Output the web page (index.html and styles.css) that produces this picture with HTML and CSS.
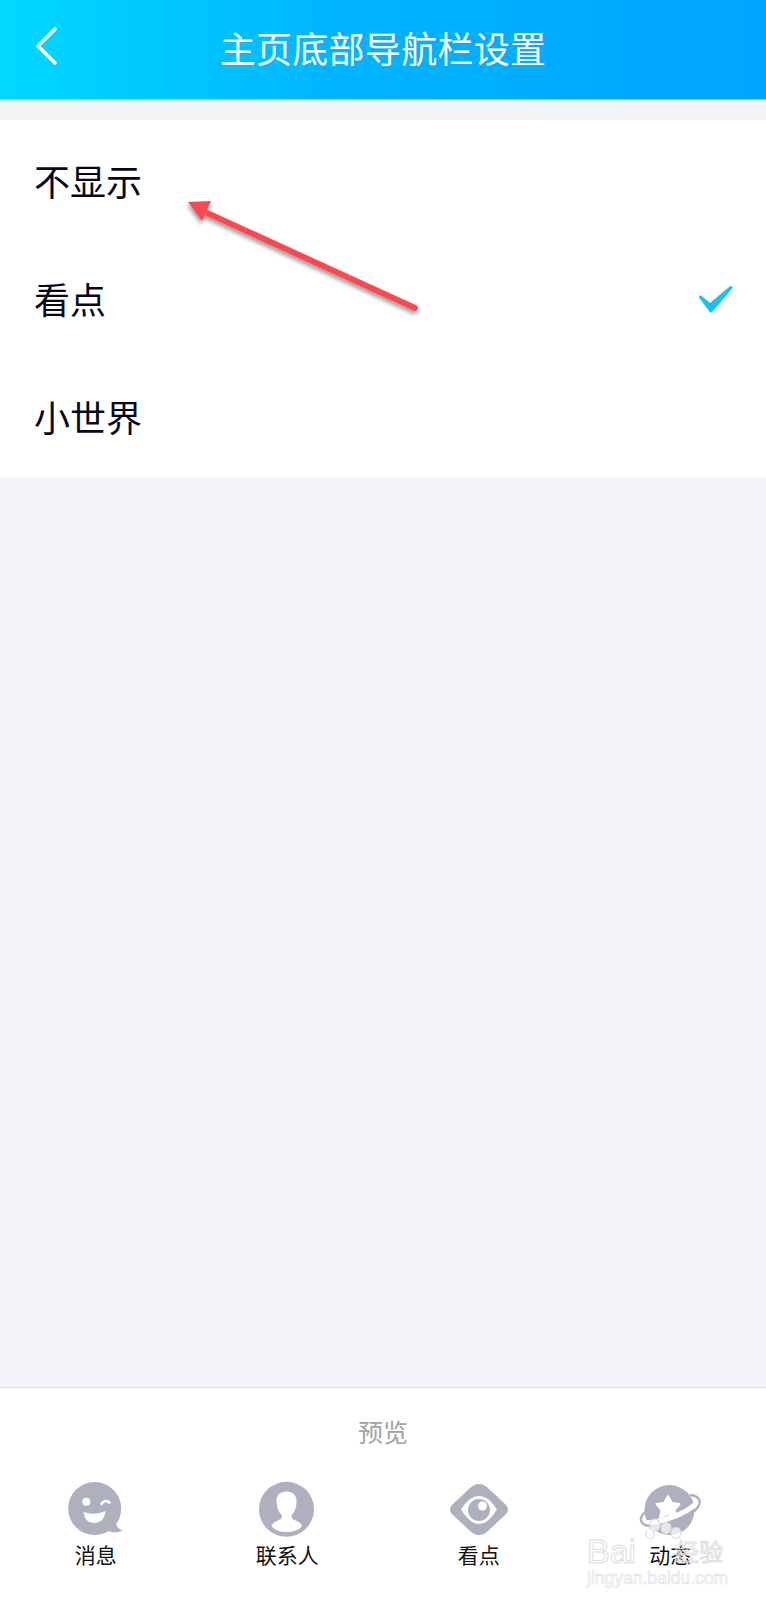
FILE: index.html
```html
<!DOCTYPE html>
<html lang="zh-CN">
<head>
    <meta charset="UTF-8">
    <meta name="viewport" content="width=device-width, initial-scale=1.0">
    <title>主页底部导航栏设置</title>
    <link rel="stylesheet" href="styles.css">
</head>
<body>
    <div class="page">
        <header class="header">
            <svg class="back" width="24" height="40" viewBox="0 0 24 40">
                <path d="M20 3 L3 20 L20 37" fill="none" stroke="#fff" stroke-width="3.6" stroke-linecap="round" stroke-linejoin="round"/>
            </svg>
            <h1>主页底部导航栏设置</h1>
        </header>

        <main class="content">
            <ul class="options">
                <li>不显示</li>
                <li>看点
                    <svg class="check" width="36" height="28" viewBox="0 0 36 28">
                        <path d="M2.5 12 L12 20 L33 2.5 L13 26 Z" fill="#12c4f4" stroke="#12c4f4" stroke-width="3" stroke-linejoin="round"/>
                    </svg>
                </li>
                <li>小世界</li>
            </ul>
        </main>

        <footer class="preview">
            <div class="preview-title">预览</div>
            <nav class="tabs">
                <div class="tab">
                    <svg width="60" height="60" viewBox="0 0 60 60">
                        <path d="M40 50 C46 53 52 53 57 50.5 C52 49 50 46 50 42 Z" fill="#aeb0be"/>
                        <circle cx="28.7" cy="28.5" r="26.5" fill="#aeb0be"/>
                        <circle cx="20.3" cy="21.7" r="4" fill="#fff"/>
                        <path d="M35.5 24 C37.5 20.5 41 20 43.5 22.5" fill="none" stroke="#fff" stroke-width="2.6" stroke-linecap="round"/>
                        <path d="M17.6 32 Q28 36 39.5 31 Q38 43 28 43 Q18.5 43 17.6 32Z" fill="#fff"/>
                    </svg>
                    <span>消息</span>
                </div>
                <div class="tab">
                    <svg width="60" height="60" viewBox="0 0 60 60">
                        <circle cx="29.5" cy="29.3" r="27.5" fill="#aeb0be"/>
                        <path d="M29.5 11.5 C36 11.5 40 15.5 39.5 22 C39.5 27 38 32 34.5 35.5 L35 38.5 C39 41 44 42 45 46 C42 50 36 52 29.5 52 C23 52 17.5 50 14.5 46 C15.5 42 20.5 41 24.5 38.5 L25 35.5 C21.5 32 20 28 20 24 L19.5 22 C19 15.5 23 11.5 29.5 11.5Z" fill="#fff"/>
                    </svg>
                    <span>联系人</span>
                </div>
                <div class="tab">
                    <svg width="60" height="60" viewBox="0 0 60 60">
                        <path d="M30 4 C34 4 37 6 40 9 L56 24 C60 27.5 60 31.5 56 35 L40 50 C37 53 34 55 30 55 C26 55 23 53 20 50 L4 35 C0 31.5 0 27.5 4 24 L20 9 C23 6 26 4 30 4Z" fill="#aeb0be"/>
                        <path d="M12 29.5 C18 20 24 16 30 16 C36 16 42 20 48 29.5 C42 39 36 44 30 44 C24 44 18 39 12 29.5Z" fill="#fff"/>
                        <circle cx="30" cy="30" r="11" fill="#aeb0be"/>
                        <circle cx="33.5" cy="26" r="4.5" fill="#fff"/>
                    </svg>
                    <span>看点</span>
                </div>
                <div class="tab">
                    <svg width="60" height="60" viewBox="0 0 60 60">
                        <circle cx="29.5" cy="30" r="25" fill="#aeb0be"/>
                        <path d="M28 16 L32 23 L39.5 24 L34.5 30 L36 37.5 L28 34 L20 37.5 L21.5 30 L16.5 24 L24 23 Z" fill="#fff" stroke="#fff" stroke-width="2" stroke-linejoin="round"/>
                        <path d="M6 43 C24 42 44 34 56 24" fill="none" stroke="#fff" stroke-width="5"/>
                        <path d="M51 15 C58 16 61 20 59 25 C56 33 36 44 16 46 C6 47 0 44 1 38 C1.5 36 3 34 5 32" fill="none" stroke="#aeb0be" stroke-width="2.4" stroke-linecap="round"/>
                    </svg>
                    <span>动态</span>
                </div>
            </nav>
        </footer>

        <!-- red arrow drawn on top of the screenshot -->
        <svg class="arrow" width="766" height="340" viewBox="0 0 766 340">
            <defs>
                <filter id="arrow-shadow" x="-10%" y="-20%" width="120%" height="140%">
                    <feDropShadow dx="-1" dy="3" stdDeviation="2" flood-color="#000" flood-opacity="0.4"/>
                </filter>
            </defs>
            <g filter="url(#arrow-shadow)">
                <path d="M205 212 L415 308" fill="none" stroke="#fb4a4f" stroke-width="6" stroke-linecap="round"/>
                <path d="M188 202 L211 201 L202 221 Z" fill="#fb4a4f"/>
            </g>
        </svg>

        <!-- site watermark -->
        <div class="watermark">
            <svg class="paw" width="40" height="30" viewBox="0 0 40 30">
                <g fill="#fff" fill-opacity="0.7" stroke="#dcdde3" stroke-width="1.2">
                    <ellipse cx="10" cy="7" rx="5" ry="6"/>
                    <ellipse cx="21" cy="10" rx="5" ry="5.5"/>
                    <ellipse cx="31" cy="15" rx="5" ry="5.5"/>
                    <ellipse cx="5" cy="16" rx="4" ry="5"/>
                </g>
            </svg>
            <div class="wm-brand"><span>Bai</span><span class="wm-cn">经验</span></div>
            <div class="wm-url">jingyan.baidu.com</div>
        </div>
    </div>
</body>
</html>
```

FILE: styles.css
```css
* {
    box-sizing: border-box;
}

body {
    margin: 0;
    font-family: "Noto Sans CJK SC", "Noto Sans", sans-serif;
    background-color: #f4f5f9;
}

.page {
    position: relative;
    display: flex;
    flex-direction: column;
    min-height: 1600px;
    overflow: hidden;
}

.header {
    position: relative;
    display: flex;
    justify-content: center;
    align-items: center;
    height: 100px;
    background: linear-gradient(90deg, #00d9ff 0%, #00b4ff 45%, #00a5ff 100%);
    border-bottom: 1px solid #6fdcff;
}

.header h1 {
    margin: 0 0 6px;
    font-size: 36px;
    font-weight: 400;
    letter-spacing: 0.3px;
    color: #fff;
}

.back {
    position: absolute;
    left: 35px;
    top: 26px;
}

.content {
    flex: 1;
    padding-top: 20px;
}

.options {
    list-style: none;
    margin: 0;
    padding: 1px 0 2px;
    background-color: #fff;
}

.options li {
    display: flex;
    justify-content: space-between;
    align-items: center;
    height: 118px;
    padding: 0 32px 0 34px;
    font-size: 36px;
    color: #05081c;
}

.check {
    margin-top: 2px;
}

.preview {
    height: 213px;
    background-color: #fff;
    border-top: 1px solid #dfe0e4;
}

.preview-title {
    padding-top: 23px;
    font-size: 25px;
    line-height: 40px;
    text-align: center;
    color: #a2a2a6;
}

.tabs {
    display: grid;
    grid-template-columns: repeat(4, 1fr);
    margin-top: 29px;
}

.tab {
    display: flex;
    flex-direction: column;
    align-items: center;
}

.tab svg {
    overflow: visible;
}

.tab span {
    margin-top: -1px;
    font-size: 21px;
    line-height: 30px;
    color: #111;
}

.arrow {
    position: absolute;
    left: 0;
    top: 0;
}

.watermark {
    position: absolute;
    left: 587px;
    top: 1516px;
    width: 136px;
    font-family: "Liberation Sans", sans-serif;
    color: transparent;
    -webkit-text-stroke: 1px #dcdde3;
}

.paw {
    position: absolute;
    left: 58px;
    top: 2px;
}

.wm-brand {
    display: flex;
    justify-content: space-between;
    margin-top: 20px;
    font-size: 34px;
    line-height: 30px;
}

.wm-cn {
    font-family: "Noto Sans CJK SC", sans-serif;
    font-size: 24px;
}

.wm-url {
    margin-top: 2px;
    font-size: 17.5px;
    line-height: 20px;
    white-space: nowrap;
    -webkit-text-stroke: 0.6px #dcdde3;
}
```
